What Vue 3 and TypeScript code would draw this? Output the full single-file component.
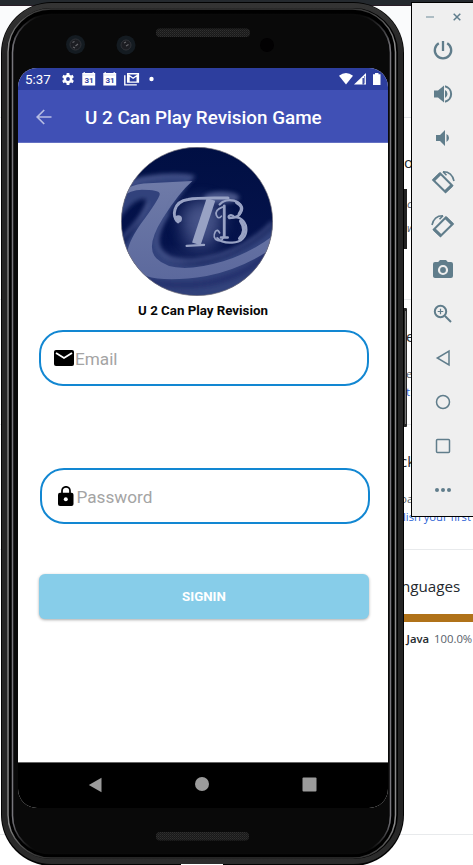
<script setup lang="ts">
interface Section {
  name: string
  heading: string
  lines: { text: string; kind: string }[]
}

const sections: Section[] = [
  { name: 'about', heading: 'o', lines: [{ text: 'c', kind: 'italic' }, { text: 'w', kind: 'italic' }] },
  { name: 'releases', heading: 'e', lines: [{ text: 'e', kind: 'muted' }, { text: 't', kind: 'link' }] },
  { name: 'packages', heading: 'ck', lines: [{ text: 'oa', kind: 'muted' }, { text: 'lish your first', kind: 'link' }] },
]

const tools: string[] = [
  'power', 'volume-up', 'volume-down', 'rotate-left', 'rotate-right',
  'camera', 'zoom', 'back', 'home', 'overview', 'more',
]
</script>

<template>
  <main class="desktop">
    <div class="page">
      <div class="page-top"></div>
      <div class="page-head"></div>
      <section v-for="s in sections" :key="s.name" class="block" :class="s.name">
        <h2>{{ s.heading }}</h2>
        <p v-for="l in s.lines" :key="l.text" :class="l.kind">{{ l.text }}</p>
      </section>
      <section class="block languages">
        <h2>nguages</h2>
        <div class="lang-bar"></div>
        <p class="lang"><b>Java</b><span>100.0%</span></p>
      </section>
    </div>

    <div class="phone">
      <svg class="frame" width="408" height="865" viewBox="0 0 408 865">
        <defs>
          <linearGradient id="edge" x1="0" y1="0" x2="0" y2="1">
            <stop offset="0" stop-color="#343434" />
            <stop offset="0.06" stop-color="#242424" />
            <stop offset="0.94" stop-color="#242424" />
            <stop offset="1" stop-color="#2c2c2c" />
          </linearGradient>
          <linearGradient id="shine" x1="0" y1="0" x2="0" y2="1">
            <stop offset="0" stop-color="#383838" />
            <stop offset="0.04" stop-color="#8a8a8a" />
            <stop offset="0.96" stop-color="#8a8a8a" />
            <stop offset="1" stop-color="#303030" />
          </linearGradient>
          <linearGradient id="inner" x1="0" y1="0" x2="0" y2="1">
            <stop offset="0.001" stop-color="#0a0a0a" />
            <stop offset="0.04" stop-color="#77767c" />
            <stop offset="0.96" stop-color="#77767c" />
            <stop offset="0.995" stop-color="#0a0a0a" />
          </linearGradient>
          <pattern id="mesh" width="2" height="2" patternUnits="userSpaceOnUse">
            <rect width="2" height="2" fill="#191919" />
            <rect width="1" height="1" fill="#303030" />
            <rect x="1" y="1" width="1" height="1" fill="#262626" />
          </pattern>
        </defs>
        <rect x="402" y="189" width="5" height="60" fill="#222" />
        <rect x="402" y="308" width="5" height="119" rx="1" fill="#252525" />
        <path d="M405.5 311v113" stroke="#777" />
        <rect x="1" y="2" width="403" height="864" rx="51" fill="#020202" />
        <rect x="4.500" y="5.500" width="396" height="856" rx="47" fill="#000" stroke="url(#edge)" stroke-width="5" />
        <rect x="8" y="9" width="387.500" height="849" rx="43" fill="#000" stroke="url(#shine)" stroke-width="1.500" />
        <rect x="12.500" y="14.500" width="378" height="839" rx="38" fill="#090909" stroke="url(#inner)" stroke-width="1.500" />
        <rect x="156" y="28.500" width="94" height="8.500" rx="4" fill="url(#mesh)" />
        <rect x="156" y="832" width="93" height="8.500" rx="4" fill="url(#mesh)" />
        <path d="M181 864.500h42" stroke="#fff" />
        <g fill="#141b21">
          <circle cx="75.500" cy="44.500" r="9.500" />
          <circle cx="126" cy="45" r="9.500" />
        </g>
        <circle cx="267" cy="45" r="7" fill="#020102" />
        <g fill="#1c1d22" stroke="#303238">
          <circle cx="75.500" cy="44.500" r="5.500" />
          <circle cx="126" cy="45" r="5" />
        </g>
        <path d="M72.500 42.500l2-1M75.500 46l2.500-2M73 47l2 1M124 43l2-1M126 46l2.500-1.500" stroke="#66666b" stroke-width="1.100" />
      </svg>

      <div class="screen">
        <div class="status">
          <span class="time">5:37</span>
          <svg class="notices" width="98" height="14" viewBox="0 0 98 14">
            <g fill="none" stroke="#fff">
              <circle cx="7" cy="7" r="3.200" stroke-width="2.600" />
              <path d="M7 1v2M7 11v2M1.800 4l1.800 1M10.400 9l1.800 1M1.800 10l1.800-1M10.400 5l1.800-1" stroke-width="2.800" />
            </g>
            <g fill="#fff">
              <path d="M21.300 1h1.200V.2H24V1h7.500V.2H33V1h1.200v12.500H21.300zM42.300 1h1.200V.2H45V1h7.500V.2H54V1h1.200v12.500H42.300z" />
              <circle cx="90.500" cy="7" r="2.200" />
            </g>
            <path d="M22 3h11.500M43 3h11.500" stroke="#c9cee8" stroke-width=".6" />
            <g class="date" fill="#3444a0">
              <text x="23.500" y="10.800">31</text>
              <text x="44.500" y="10.800">31</text>
            </g>
            <path d="M66.700 1.700h10.700v8.400H66.700zM63.800 3.200v9.700h12M67.500 3l4.600 3.200L76.700 3M68 3v7M76.200 3v7" fill="none" stroke="#fff" stroke-width="1.400" />
          </svg>
          <svg class="signals" width="42" height="12" viewBox="0 0 42 12">
            <path d="M0 2.800Q7-2.700 14 2.800L7 11.500z" fill="#fff" />
            <path d="M15 11.500L27 0v11.500z" fill="#fff" />
            <path d="M24.200 5v6.500" stroke="#2d3e9e" stroke-width="1.400" />
            <path d="M25.600 3v7.500" stroke="#8791c8" stroke-width="1.200" />
            <path d="M34 1.300h2V0h3.500v1.300h2V12H34z" fill="#fff" />
          </svg>
        </div>
        <header class="appbar">
          <svg width="16" height="16" viewBox="0 0 16 16" fill="none" stroke="#b6bce3" stroke-width="1.700">
            <path d="M15.500 8H1.500M8.200 1L1.200 8l7 7" />
          </svg>
          <h1>U 2 Can Play Revision Game</h1>
        </header>

        <form class="login" @submit.prevent>
          <svg class="logo" width="152" height="149" viewBox="33 21 456 446" preserveAspectRatio="none">
            <defs>
              <clipPath id="disc"><ellipse cx="261" cy="244" rx="227" ry="222" /></clipPath>
              <linearGradient id="navy" x1="0" y1="0" x2="0" y2="1">
                <stop offset="0" stop-color="#000f43" />
                <stop offset="0.65" stop-color="#05134c" />
                <stop offset="1" stop-color="#33427a" />
              </linearGradient>
              <linearGradient id="swoosh" x1="0" y1="0" x2="0" y2="1">
                <stop offset="0" stop-color="#6f7ba8" />
                <stop offset="1" stop-color="#5c699d" />
              </linearGradient>
              <filter id="soft" x="-30%" y="-30%" width="160%" height="160%"><feGaussianBlur stdDeviation="7" /></filter>
              <filter id="haze" x="-50%" y="-50%" width="200%" height="200%"><feGaussianBlur stdDeviation="24" /></filter>
            </defs>
            <g clip-path="url(#disc)">
              <path d="M33 21h456v446H33z" fill="url(#navy)" />
              <g filter="url(#soft)">
                <path d="M30 127Q120 93 258 107Q218 152 178 219Q125 305 155 342Q225 405 360 345Q433 315 500 250V420Q350 480 175 455Q70 438 25 330Q70 285 107 208Q120 181 100 177Q70 178 25 240z" fill="#33427b" />
                <path d="M175 220Q128 290 150 329Q190 385 330 344Q420 315 488 246M60 130Q145 96 246 109M30 300Q100 230 113 185" fill="none" stroke="#4e5b93" stroke-width="8" />
                <path d="M105 422Q280 460 420 383L488 330" fill="none" stroke="#26336e" stroke-width="22" />
              </g>
              <path d="M35 155Q63 134 101 130L247 123Q207 158 158 235Q105 320 139 354Q190 407 340 363Q430 335 500 278V315Q402 385 290 407Q170 426 108 407Q55 390 51 344Q52 310 91 253Q153 169 149 160Q146 149 96 149Q60 150 35 171z" fill="url(#swoosh)" />
              <ellipse cx="275" cy="240" rx="62" ry="62" fill="#7380b3" opacity=".6" filter="url(#haze)" />
              <ellipse cx="335" cy="172" rx="53" ry="18" fill="#6672a4" opacity=".7" filter="url(#soft)" />
              <ellipse cx="270" cy="301" rx="55" ry="24" fill="#5e6ba0" opacity=".5" filter="url(#haze)" />
              <g fill="none" stroke="#98a2c4" stroke-linecap="round">
                <circle cx="205" cy="236" r="11" fill="#98a2c4" stroke="none" />
                <path d="M204 245C184 230 190 184 234 178Q263 172 354 174" stroke-width="9" />
                <path d="M303 178Q279 250 259 311" stroke-width="27" stroke-linecap="butt" />
                <path d="M230 317L282 314" stroke-width="7" />
                <path d="M337 201Q314 210 319 225Q325 239 334 228M341 197V285Q340 305 323 301Q306 293 316 274Q323 265 329 278" stroke-width="5" />
                <path d="M343 197V292M333 292h20" stroke-width="8" />
                <path d="M329 193C350 168 400 182 394 211Q389 234 358 234C350 225 366 221 373 231C420 230 424 307 367 307Q335 309 322 294" stroke-width="7" />
                <path d="M380 187Q405 200 388 221M392 243Q412 272 389 295" stroke-width="10" />
              </g>
            </g>
            <ellipse cx="261" cy="244" rx="227" ry="222" fill="none" stroke="#7b7880" stroke-width="2" />
          </svg>
          <h2>U 2 Can Play Revision</h2>
          <label class="field email">
            <svg width="20" height="16" viewBox="0 0 20 16">
              <rect width="20" height="16" rx="2" />
              <path d="M2 3l8 5 8-5" fill="none" stroke="#fff" stroke-width="1.900" />
            </svg>
            <span>Email</span>
          </label>
          <label class="field password">
            <svg width="16" height="20" viewBox="0 0 16 20">
              <path d="M4 8V4.800a4 4 0 018 0V8" fill="none" stroke="#000" stroke-width="1.700" />
              <rect y="6.700" width="15.500" height="13.300" rx="2" />
              <circle cx="7.800" cy="13.300" r="2" fill="#fff" />
            </svg>
            <span>Password</span>
          </label>
          <button type="submit">SIGNIN</button>
        </form>

        <nav class="navbar">
          <svg width="14" height="16" viewBox="0 0 14 16"><path d="M13.500.8v14.400L.8 8z" /></svg>
          <svg width="14" height="14" viewBox="0 0 14 14"><circle cx="7" cy="7" r="7" /></svg>
          <svg width="15" height="15" viewBox="0 0 15 15"><rect x=".5" y=".5" width="14" height="14" rx="1" /></svg>
        </nav>
      </div>
    </div>

    <aside class="emulator">
      <div class="window-buttons">
        <svg width="8" height="8" viewBox="0 0 8 8"><path d="M0 4h8" stroke="#9eb0b9" stroke-width="1.600" /></svg>
        <svg width="8" height="8" viewBox="0 0 8 8"><path d="M.7.7l6.600 6.600M7.300.7L.7 7.300" stroke="#5f7d8c" stroke-width="1.500" /></svg>
      </div>
      <div v-for="tool in tools" :key="tool" class="tool">
        <svg width="24" height="24" viewBox="0 0 24 24">
          <g v-if="tool === 'power'" class="line bold">
            <path d="M12 3v10M7.800 5.200a8.200 8.200 0 108.400 0" />
          </g>
          <g v-else-if="tool === 'volume-up'">
            <path d="M3 8.500v7h4l6 5v-17l-6 5zM14 8v8q2.500-1.200 2.500-4T14 8z" />
            <path class="line" d="M14 4.300a7.900 7.900 0 010 15.400" />
          </g>
          <path v-else-if="tool === 'volume-down'" d="M5 9v6h4l5 5V4L9 9zM15.500 8v8q2.500-1.200 2.500-4t-2.500-4z" />
          <g v-else-if="tool === 'rotate-left'" class="line">
            <path d="M9 3.300L21.200 15.500 14.500 22 2.200 10z" />
            <path d="M2.500 10.500L9.300 3.700M14.300 21.500l6.500-6.200" stroke-width="3" />
            <path class="arc" d="M12 1.700Q21 1.500 23 11M12 1.700l3.500 3.500" />
          </g>
          <g v-else-if="tool === 'rotate-right'" class="line">
            <path d="M15 3.300L2.800 15.500 9.500 22 21.800 10z" />
            <path d="M21.500 10.500L14.700 3.700M9.700 21.500l-6.500-6.200" stroke-width="3" />
            <path class="arc" d="M12 1.700Q3 1.500 1 11M12 1.700L8.500 5.200" />
          </g>
          <g v-else-if="tool === 'camera'">
            <path d="M9 2L7.200 4H4a2 2 0 00-2 2v12c0 1.100.9 2 2 2h16a2 2 0 002-2V6a2 2 0 00-2-2h-3.200L15 2z" />
            <circle cx="12" cy="12" r="4" fill="#607d8b" stroke="#eee" stroke-width="2.200" />
          </g>
          <g v-else-if="tool === 'zoom'" class="line">
            <circle cx="9.500" cy="9.500" r="5.700" />
            <path d="M14 14l6 6" />
            <path class="thin" d="M9.500 6.700v5.600M6.700 9.500h5.600" />
          </g>
          <path v-else-if="tool === 'back'" class="line medium" d="M18 5v14L6.300 12z" />
          <circle v-else-if="tool === 'home'" class="line medium" cx="12" cy="12" r="6.500" />
          <rect v-else-if="tool === 'overview'" class="line medium" x="5.500" y="5.500" width="13" height="13" rx="1" />
          <g v-else>
            <circle cx="6" cy="12" r="2" /><circle cx="12" cy="12" r="2" /><circle cx="18" cy="12" r="2" />
          </g>
        </svg>
      </div>
    </aside>
  </main>
</template>

<style>
body {
  margin: 0;
  overflow: hidden;
}
</style>

<style scoped>
* {
  box-sizing: border-box;
}

h1, h2, p {
  margin: 0;
}

svg {
  display: block;
  flex: none;
}

.desktop {
  position: relative;
  width: 473px;
  height: 865px;
  overflow: hidden;
  background: #fff;
  font-family: Roboto, sans-serif;
}

.page {
  color: #24292e;
  font-family: "Open Sans", "Noto Sans", sans-serif;
  white-space: nowrap;
}

.page-top {
  height: 6px;
  background: #24292e;
  border-bottom: 1px solid #2a1e28;
}

.page-head {
  height: 112px;
  background: #fafbfc;
  border-bottom: 1px solid #e1e4e8;
}

.block {
  height: 125px;
  padding: 24px 0 0 404px;
  border-bottom: 1px solid #e8eaec;
}

.block h2 {
  height: 24px;
  margin-bottom: 17px;
  font-size: 15px;
  line-height: 24px;
  font-weight: 500;
}

.block p {
  height: 18px;
  font-size: 11.500px;
  line-height: 18px;
}

.about {
  height: 182px;
  padding-top: 32px;
}

.about h2 {
  margin-bottom: 21px;
}

.about p {
  margin-bottom: 6px;
  padding-left: 3px;
}

.releases {
  padding-left: 406px;
}

.packages {
  padding-left: 400px;
}

.packages .link {
  padding-left: 3px;
  font-size: 11.200px;
}

.italic {
  color: #586069;
  font-style: italic;
}

.muted {
  color: #586069;
}

.link {
  color: #2a62d5;
}

.languages {
  height: 285px;
  padding-left: 401px;
}

.languages h2 {
  margin-bottom: 16px;
  font-size: 15.200px;
}

.lang-bar {
  height: 8px;
  background: #b07219;
}

.languages .lang {
  display: flex;
  gap: 5px;
  margin-top: 8px;
  padding-left: 5.500px;
  font-size: 11.300px;
}

.lang b {
  font-weight: 600;
}

.lang span {
  color: #586069;
}

.phone {
  position: absolute;
  top: 0;
  left: 0;
  width: 408px;
  height: 865px;
  padding: 68px 20px 57px 18px;
}

.frame {
  position: absolute;
  top: 0;
  left: 0;
}

.screen {
  position: relative;
  display: flex;
  flex-direction: column;
  width: 370px;
  height: 740px;
  overflow: hidden;
  border-radius: 19px;
  background: #fff;
}

.status {
  display: flex;
  align-items: center;
  height: 22px;
  padding: 0 7px 0 7px;
  background: #2d3e9e;
  color: #fff;
}

.time {
  width: 36px;
  font-size: 13.300px;
}

.date {
  font: 700 8px Roboto, sans-serif;
}

.signals {
  margin-left: auto;
}

.appbar {
  display: flex;
  align-items: center;
  gap: 33px;
  height: 53px;
  padding: 2px 18px 0 18px;
  background: #4050b5;
  border-bottom: 1px solid #6370c2;
  color: #fff;
}

.appbar h1 {
  padding-top: 1px;
  font-size: 18.850px;
  line-height: 24px;
  font-weight: 500;
  white-space: nowrap;
}

.login {
  display: flex;
  flex: 1;
  flex-direction: column;
  padding: 4px 18px 0 21px;
}

.logo {
  margin-left: 82px;
}

.login h2 {
  margin: 6px 3px 11px 0;
  color: #080808;
  font-size: 13.300px;
  line-height: 17px;
  font-weight: 700;
  text-align: center;
}

.field {
  display: flex;
  align-items: center;
  width: 330px;
  height: 56px;
  padding-left: 13.500px;
  border: 2px solid #1287d2;
  border-radius: 24px;
  color: #a4a4a4;
  font-size: 17.200px;
}

.email {
  margin-left: -.5px;
}

.field svg {
  margin-top: -1px;
}

.field span {
  padding: 2px 0 0 1px;
}

.password {
  margin: 82px 0 50px 1px;
  padding-left: 15.500px;
}

.password span {
  padding: 1px 0 0 3px;
}

.login button {
  width: 330px;
  height: 45px;
  border: 0;
  border-radius: 6px;
  background: #87cde9;
  box-shadow: 0 1px 3px #0005;
  color: #fff;
  font: 700 13.300px Roboto, sans-serif;
}

.navbar {
  display: flex;
  align-items: flex-start;
  justify-content: space-between;
  height: 46px;
  padding: 14px 71px 0 70px;
  border-top: 1px solid #666;
  background: #000;
  fill: #9b9b9b;
}

.emulator {
  position: absolute;
  top: 2px;
  left: 411px;
  width: 70px;
  height: 515px;
  border: 1px solid #000;
  background: #efefef;
}

.window-buttons {
  display: flex;
  gap: 19px;
  align-items: center;
  height: 25px;
  padding: 3px 0 0 14px;
}

.tool {
  display: flex;
  align-items: center;
  height: 44px;
  padding-left: 19px;
  fill: #607d8b;
}

.line {
  fill: none;
  stroke: #607d8b;
  stroke-width: 2;
}

.bold {
  stroke-width: 2.300;
}

.medium {
  stroke-width: 1.500;
}

.thin {
  stroke-width: 1.200;
}

.arc {
  stroke-width: 1.600;
}
</style>
